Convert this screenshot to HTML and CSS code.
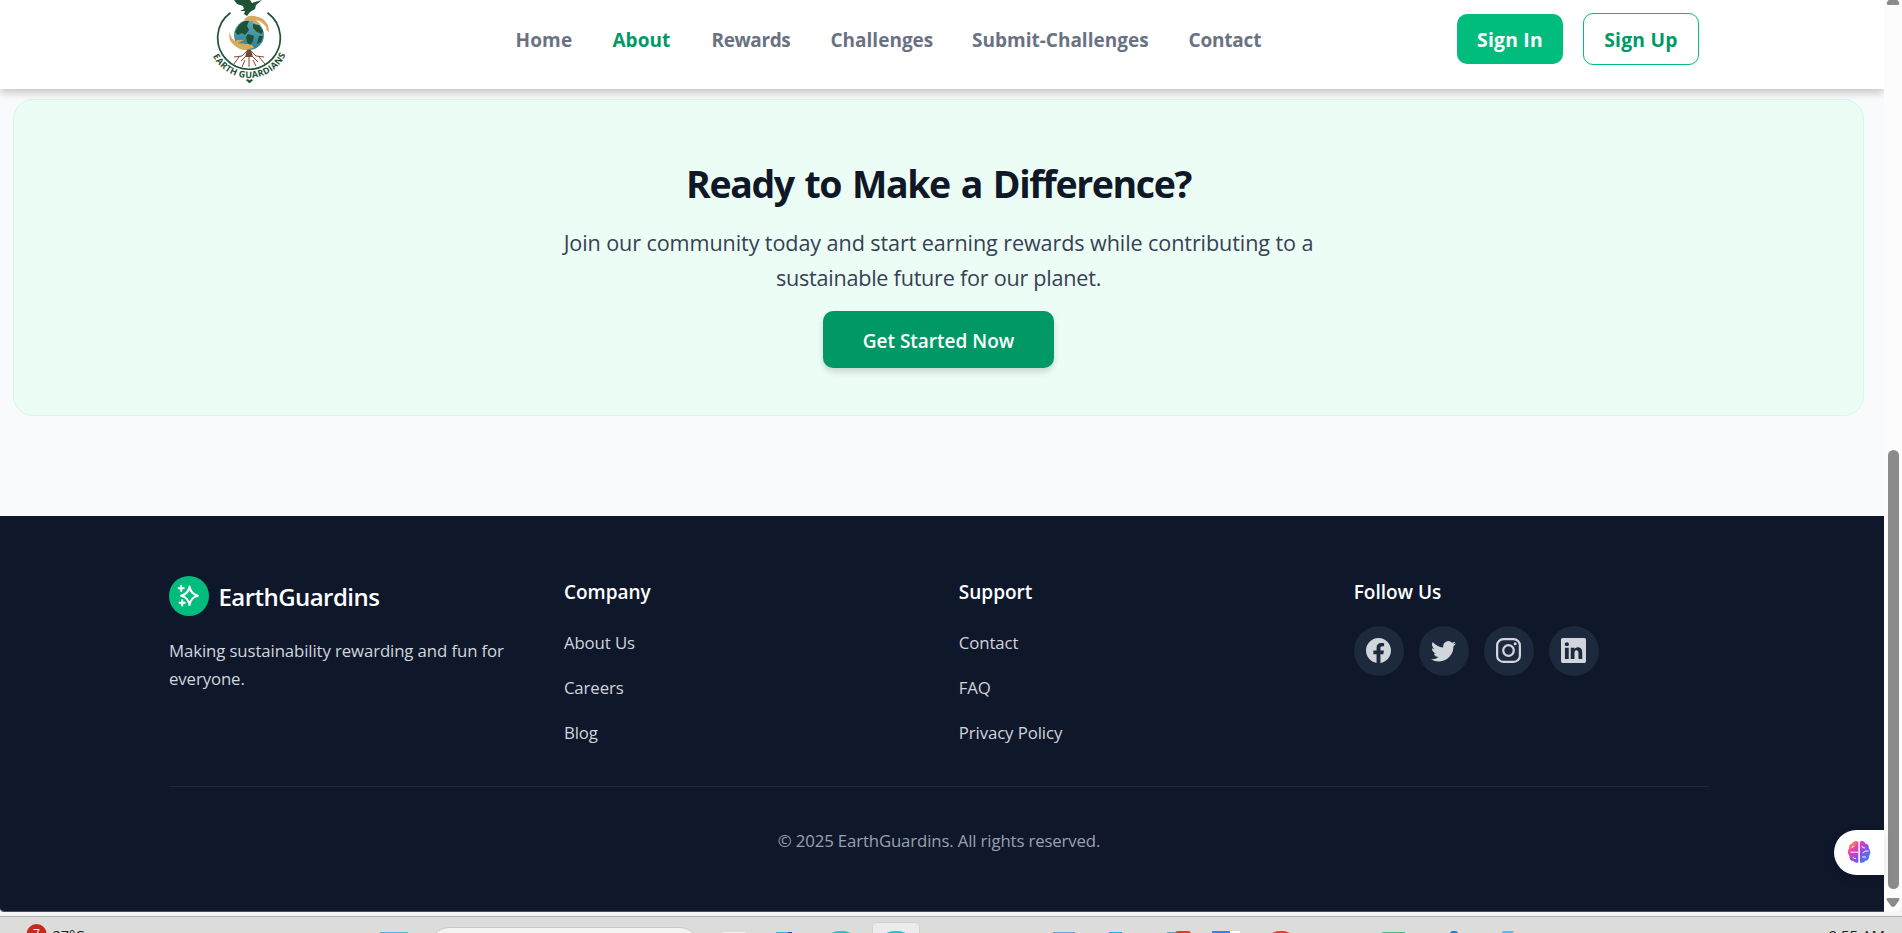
FILE: index.html
```html
<!DOCTYPE html>
<html lang="en">
<head>
<meta charset="utf-8">
<title>EarthGuardins</title>
<link rel="stylesheet" href="styles.css">
</head>
<body>
<div class="window">
  <div class="page">
    <header class="header">
      <svg class="logo" viewBox="211 0 76 88" width="76" height="88">
        <defs>
          <path id="ring-text" d="M208.400 37.500A40.600 40.600 0 0 0 289.600 37.500"/>
          <linearGradient id="sea" x1="0" y1="0" x2="0" y2="1"><stop offset="0" stop-color="#5fa9b4"/><stop offset="1" stop-color="#2c7f92"/></linearGradient>
        </defs>
        <path d="M230.500 12.700A31.300 31.300 0 1 0 267.500 12.700" fill="none" stroke="#1f5135" stroke-width="1.700"/>
        <circle cx="249" cy="35" r="15" fill="url(#sea)"/>
        <path d="M239 25q5-5 10-4l-2 5 2 4-4 5-3-2-4 2-3-3zM253 24l6 1 4 6-1 3-5-2-4-4zM248 34l6 2-1 5-3 5-3-4-1-5zM259 36l4 0-2 6-4 2z" fill="#1f5135"/>
        <path d="M244 20q3-5 10-4 10 1 14 9l1 7q-3-1-3-5-4-6-10-7l5 5q-6 0-9-4zM230 32q-2 6 1 10 6 7 13 8l10-2q-1-4-7-4l-9-1 6-3q-5-1-9 1-5-3-5-9z" fill="#d5ab5c"/>
        <path d="M247 51l-5 5-8 1M251 51l5 5 8 1M246 56l-5 5M252 56l6 6M249 56v11M245 60l-3 7M253 60l3 6M239 57l-5 7M259 57l6 7" fill="none" stroke="#7d4a2b" stroke-width="1"/>
        <path d="M247 50h4l2 7h-8z" fill="#7d4a2b"/>
        <path d="M234 0l3 4 6 2 1 3-4 2 5 0-1 3 3 2 3-4 5-3 1-4 6-5-7 2-3 1-2-3z" fill="#1f5135"/>
        <path d="M249.500 83l-3-3q2-1 3 1 1-2 3-1z" fill="#1f5135" stroke="#1f5135"/>
        <text class="logo-text"><textPath href="#ring-text" startOffset="19.300" textLength="90">EARTH GUARDIANS</textPath></text>
      </svg>
      <nav class="nav">
        <a class="nav-link home">Home</a>
        <a class="nav-link about">About</a>
        <a class="nav-link rewards">Rewards</a>
        <a class="nav-link challenges">Challenges</a>
        <a class="nav-link submit">Submit-Challenges</a>
        <a class="nav-link contact">Contact</a>
      </nav>
      <div class="auth">
        <a class="btn sign-in">Sign In</a>
        <a class="btn sign-up">Sign Up</a>
      </div>
    </header>
    <main class="main">
      <section class="cta">
        <h2 class="cta-title">Ready to Make a Difference?</h2>
        <p class="cta-text">Join our community today and start earning rewards while contributing to a<br><span class="cta-line">sustainable future for our planet.</span></p>
        <a class="cta-btn">Get Started Now</a>
      </section>
    </main>
    <footer class="footer">
      <div class="footer-grid">
        <div class="brand-col">
          <div class="brand">
            <svg width="40" height="40" viewBox="0 0 40 40"><circle cx="20" cy="20" r="20" fill="#00bc7d"/><path d="M20.500 10.500q1.300 7.700 8.500 9.200-7.200 1.600-8.500 9.300-1.300-7.700-8.500-9.300 7.200-1.500 8.500-9.200z" fill="none" stroke="#fff" stroke-width="2" stroke-linejoin="round"/><path d="M12.200 9.700v5.200M9.600 12.300h5.200M13.200 24.200v5.200M10.600 26.800h5.200" stroke="#fff" stroke-width="2" stroke-linecap="round"/></svg>
            <span class="brand-name">EarthGuardins</span>
          </div>
          <p class="tagline">Making sustainability rewarding and fun for<br>everyone.</p>
        </div>
        <div class="col">
          <h3 class="col-title">Company</h3>
          <ul class="links"><li>About Us</li><li>Careers</li><li>Blog</li></ul>
        </div>
        <div class="col">
          <h3 class="col-title">Support</h3>
          <ul class="links"><li>Contact</li><li>FAQ</li><li>Privacy Policy</li></ul>
        </div>
        <div class="col">
          <h3 class="col-title">Follow Us</h3>
          <div class="social">
            <a class="social-link"><svg width="25" height="25" viewBox="0 0 16 16" fill="currentColor"><path d="M16 8.049c0-4.446-3.582-8.05-8-8.05C3.58 0-.002 3.603-.002 8.05c0 4.017 2.926 7.347 6.750 7.951v-5.625h-2.030V8.050H6.750V6.275c0-2.017 1.195-3.131 3.022-3.131.876 0 1.791.157 1.791.157v1.980h-1.009c-.993 0-1.303.621-1.303 1.258v1.510h2.218l-.354 2.326H9.250V16c3.824-.604 6.750-3.934 6.750-7.951"/></svg></a>
            <a class="social-link"><svg width="25" height="25" viewBox="0 0 16 16" fill="currentColor"><path d="M5.026 15c6.038 0 9.341-5.003 9.341-9.334q.002-.211-.006-.422A6.700 6.700 0 0 0 16 3.542a6.700 6.700 0 0 1-1.889.518 3.300 3.300 0 0 0 1.447-1.817 6.500 6.500 0 0 1-2.087.793A3.286 3.286 0 0 0 7.875 6.030a9.320 9.320 0 0 1-6.767-3.429 3.290 3.290 0 0 0 1.018 4.382A3.300 3.300 0 0 1 .64 6.575v.045a3.290 3.290 0 0 0 2.632 3.218 3.200 3.200 0 0 1-.865.115 3 3 0 0 1-.614-.057 3.280 3.280 0 0 0 3.067 2.277A6.600 6.600 0 0 1 .78 13.580a6 6 0 0 1-.78-.045A9.340 9.340 0 0 0 5.026 15"/></svg></a>
            <a class="social-link"><svg width="25" height="25" viewBox="0 0 16 16"><rect x=".72" y=".72" width="14.560" height="14.560" rx="4" fill="none" stroke="currentColor" stroke-width="1.440"/><circle cx="8" cy="8" r="3.390" fill="none" stroke="currentColor" stroke-width="1.440"/><circle cx="12.270" cy="3.730" r=".96" fill="currentColor"/></svg></a>
            <a class="social-link"><svg width="25" height="25" viewBox="0 0 16 16" fill="currentColor"><path d="M0 1.146C0 .513.526 0 1.175 0h13.650C15.474 0 16 .513 16 1.146v13.708c0 .633-.526 1.146-1.175 1.146H1.175C.526 16 0 15.487 0 14.854zm4.943 12.248V6.169H2.542v7.225zm-1.200-8.212c.837 0 1.358-.554 1.358-1.248-.015-.709-.520-1.248-1.342-1.248S2.400 3.226 2.400 3.934c0 .694.521 1.248 1.327 1.248zm4.908 8.212V9.359c0-.216.016-.432.080-.586.173-.431.568-.878 1.232-.878.869 0 1.216.662 1.216 1.634v3.865h2.401V9.250c0-2.220-1.184-3.252-2.764-3.252-1.274 0-1.845.700-2.165 1.193v.025h-.016l.016-.025V6.169h-2.400c.030.678 0 7.225 0 7.225z"/></svg></a>
          </div>
        </div>
      </div>
      <p class="copyright">© 2025 EarthGuardins. All rights reserved.</p>
    </footer>
  </div>
  <div class="scrollbar">
    <svg width="18" height="912" viewBox="0 0 18 912"><path d="M4.500 0h9l2 3q0 2-2 2h-9q-2 0-2-2zM4.500 898h9q3 0 1.500 2.500l-4 5.500q-2 2-4 0l-4-5.500q-1.500-2.500 1.500-2.500z" fill="#8b8b8b"/><rect x="4" y="450" width="11" height="439" rx="5.500" fill="#8b8b8b"/></svg>
  </div>
  <div class="fab">
    <svg width="24" height="24" viewBox="0 0 24 24">
      <defs><linearGradient id="brain" x1="0" y1="0" x2="1" y2="1"><stop offset="0.100" stop-color="#ff9b26"/><stop offset=".3" stop-color="#f13db0"/><stop offset=".58" stop-color="#8a4be8"/><stop offset="1" stop-color="#1f96ff"/></linearGradient></defs>
      <path d="M11.300 1.500v21q-3.500 1-5-1.500Q2 20.500 2.500 16-.5 12 2 8.500 1.500 4.500 5 3.500q2-3.500 6.300-2zM12.900 1.500q4-1.500 5.500 2 3.800 1 3.300 4.500 3 4 .5 8 0 4.500-4 5-1.500 2.500-5.300 1.500z" fill="url(#brain)"/>
      <path d="M3.500 12.200h7.500M5 8q0-2 2.500-2M6 17q.5 2 3 1.500M15 6q0 2 3 2M15.500 13l3-2 3 0M15 17h4" fill="none" stroke="#fff" stroke-width="1"/>
    </svg>
  </div>
</div>
<svg class="taskbar" width="1902" height="17" viewBox="0 916 1902 17">
  <rect y="916" width="1902" height="1" fill="#b0aeb0"/>
  <circle cx="36.600" cy="934" r="10" fill="#c42b1c"/>
  <text class="badge-text" x="33" y="938">7</text>
  <text class="task-text temp" x="52.500" y="941">27°C</text>
  <rect x="380" y="932" width="28" height="4" fill="#4cb8e8"/>
  <rect x="429.500" y="927.500" width="270" height="40" rx="20" fill="#f3f3f2" stroke="#c9c9c8"/>
  <rect x="723" y="932" width="23" height="4" fill="#f2f2f2"/>
  <rect x="776" y="932" width="13" height="4" fill="#35aee8"/><rect x="788" y="932" width="4" height="4" fill="#2a4fc0"/>
  <ellipse cx="841" cy="936" rx="12" ry="5" fill="#2bbfc8"/>
  <rect x="872.500" y="922.500" width="47" height="30" rx="4" fill="#ececec" stroke="#d2d2d2"/>
  <ellipse cx="896" cy="936" rx="12" ry="5" fill="#2bbfd8"/>
  <rect x="1053" y="932" width="22" height="4" fill="#6aa9e0"/>
  <rect x="1109" y="932" width="13" height="4" fill="#12b4f5"/>
  <rect x="1167" y="932" width="10" height="4" fill="#5aa7c8"/><rect x="1175" y="931" width="16" height="6" rx="3" fill="#e8382f"/>
  <rect x="1212" y="931" width="18" height="6" fill="#2f86f0"/><rect x="1230" y="931" width="10" height="6" fill="#fff"/>
  <ellipse cx="1281" cy="936" rx="11" ry="5" fill="#e23b2e"/>
  <rect x="1382" y="932" width="23" height="4" fill="#45bd85"/>
  <rect x="1450" y="931" width="8" height="6" rx="3" fill="#0f7fd0"/>
  <path d="M1503 931h11l-2 3h-11z" fill="#55bdf5"/>
  <text class="task-text" x="1828.500" y="941">9:55 AM</text>
</svg>
</body>
</html>
```
FILE: styles.css
```css
* { box-sizing: border-box; margin: 0; padding: 0; }
body { width: 1902px; height: 933px; overflow: hidden; background: #dcdcdb; font-family: "Open Sans", "Noto Sans", sans-serif; }
.window { position: relative; display: flex; width: 1902px; height: 916px; padding-bottom: 4px; background: #f4f4f4; }
.page { width: 1884px; height: 912px; background: #f9fafb; display: flex; flex-direction: column; border-bottom: 1px solid #4a4f5c; overflow: hidden; border-radius: 0 0 0 4px; }
.header { position: relative; z-index: 1; flex: none; display: flex; height: 89px; padding-left: 211px; background: #fff; box-shadow: 0 4px 8px rgba(0,0,0,.2); }
.logo { overflow: visible; }
.logo-text { font-size: 9px; font-weight: 700; fill: #1f5135; }
.nav { display: flex; gap: 40px; margin-left: 228.500px; padding-top: 25px; }
.nav-link { font-size: 19px; line-height: 30px; font-weight: 700; letter-spacing: 0; color: #6a7282; white-space: nowrap; }
.home { width: 57px; letter-spacing: .15px; }
.about { width: 59px; color: #009966; }
.rewards { width: 79px; letter-spacing: -.4px; }
.challenges { width: 101.500px; }
.submit { width: 176.500px; }
.contact { width: 73px; letter-spacing: -.2px; }
.auth { display: flex; align-items: center; gap: 20px; height: 78px; margin-left: 195.500px; }
.btn { border-radius: 10px; font-size: 19.300px; line-height: 30px; font-weight: 700; letter-spacing: .25px; white-space: nowrap; text-align: center; }
.sign-in { width: 106px; height: 50px; padding-top: 11px; background: #00bc7d; color: #fff; }
.sign-up { width: 116px; height: 52px; padding-top: 11px; border: 1px solid #00bc7d; color: #009966; }
.main { flex: none; height: 427px; padding: 10px 20px 0 13px; }
.cta { height: 317px; border: 1px solid #d0fae5; border-radius: 20px; background: #ecfdf5; text-align: center; display: flex; flex-direction: column; align-items: center; }
.cta-title { margin-top: 59px; font-size: 37.500px; line-height: 50px; font-weight: 700; letter-spacing: -1.4px; word-spacing: 2.500px; color: #101828; white-space: nowrap; }
.cta-text { margin-top: 16px; font-size: 21.600px; line-height: 35px; letter-spacing: -.1px; color: #364153; white-space: nowrap; }
.cta-line { letter-spacing: -.24px; }
.cta-btn { width: 231px; height: 57px; margin-top: 16px; padding-top: 15px; border-radius: 10px; background: #009966; color: #fff; font-size: 19px; line-height: 30px; font-weight: 600; box-shadow: 0 4px 6px rgba(0,0,0,.15); }
.footer { flex: 1; padding: 60px 175px 0 169px; background: #0f172b; }
.footer-grid { display: grid; grid-template-columns: repeat(4, 394.900px); height: 210px; }
.brand { display: flex; align-items: center; gap: 9.500px; height: 40px; }
.brand-name { padding-top: 2px; font-size: 24px; line-height: 40px; font-weight: 600; letter-spacing: -.55px; color: #fff; }
.tagline { margin-top: 21px; font-size: 16.800px; line-height: 28px; letter-spacing: -.11px; color: #d1d5dc; white-space: nowrap; }
.col-title { font-size: 19px; line-height: 30px; font-weight: 600; color: #fff; padding-top: 1px; }
.links { list-style: none; margin-top: 22px; display: grid; gap: 17px; font-size: 16.800px; line-height: 28px; letter-spacing: -.1px; color: #d1d5dc; }
.social { display: flex; gap: 15px; margin-top: 19px; }
.social-link { display: flex; width: 50px; height: 50px; padding: 12px; border-radius: 50%; background: #1d293d; color: #d1d5dc; }
.copyright { border-top: 1px solid #1d293d; padding-top: 40px; font-size: 16.800px; line-height: 28px; letter-spacing: -.14px; text-align: center; color: #99a1af; }
.scrollbar { width: 18px; height: 912px; background: #fcfcfc; border-radius: 0 0 8px 0; }
.fab { position: absolute; left: 1834px; top: 830px; width: 50px; height: 45px; padding: 10px 0 0 13px; border-radius: 23px 0 0 23px; background: #fff; box-shadow: 0 4px 12px rgba(0,0,0,.1); }
.taskbar { display: block; }
.task-text { font-size: 15px; fill: #222; }
.temp { font-size: 14.500px; }
.badge-text { font-size: 12px; fill: #fff; }
```
